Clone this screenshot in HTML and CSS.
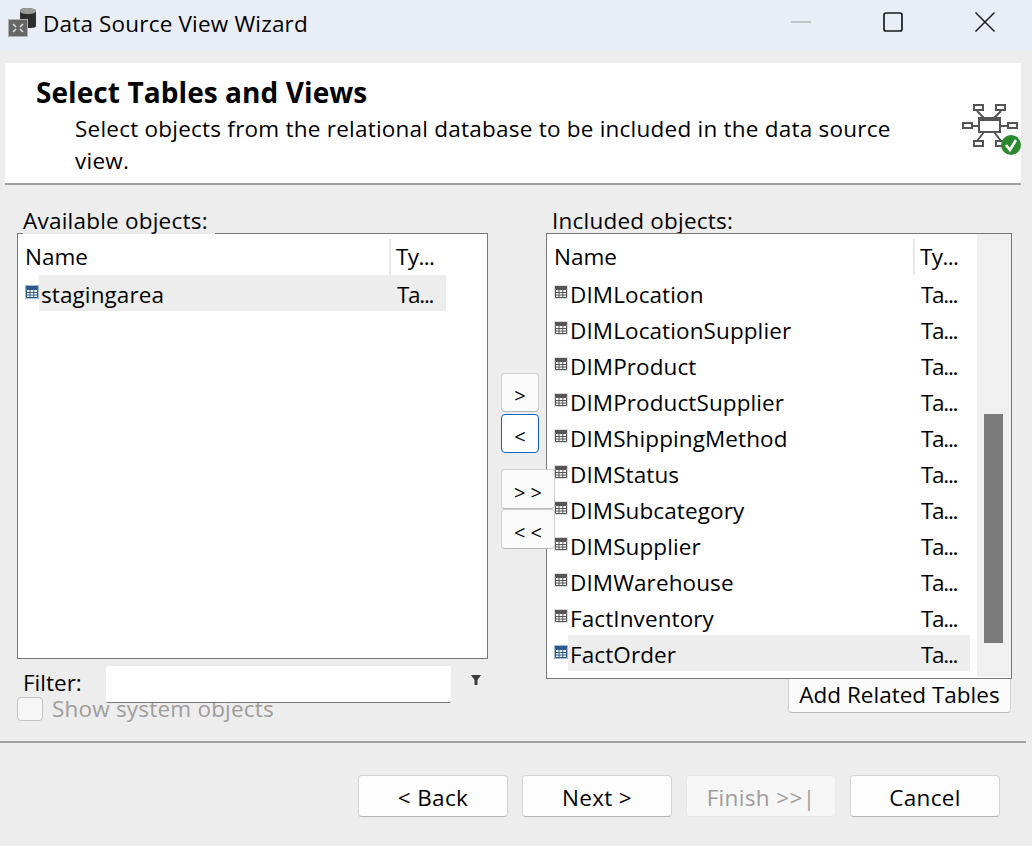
FILE: index.html
```html
<!DOCTYPE html>
<html>
<head>
  <title>Data Source View Wizard</title>
  <link rel="stylesheet" href="styles.css">
</head>
<body>
  <div class="titlebar">
    <svg class="app-icon" width="32" height="30" viewBox="0 0 32 30">
      <path d="M13 4c0-2 3-3 7-3s9 1 9 3v15c0 1-2 2-5 2h-11z" fill="#2e2e2e"/>
      <path d="M13 4c0-2 3-3 7-3s9 1 9 3-3 3-8 3-8-1-8-3z" fill="#9a9a9a"/>
      <rect x="1.5" y="12.5" width="19" height="17" fill="#666" stroke="#b0b0b0"/>
      <path d="M6 17l3 3M16 17l-3 3M6 25l3-3M16 25l-3-3" stroke="#dcdcdc" stroke-width="1.6"/>
    </svg>
    <span class="app-title">Data Source View Wizard</span>
    <div class="win-buttons">
      <svg width="22" height="22" viewBox="0 0 22 22"><path d="M1 11h20" stroke="#b4b4b4" stroke-width="1.5"/></svg>
      <svg width="22" height="22" viewBox="0 0 22 22"><rect x="2" y="2" width="18" height="18" rx="2" fill="none" stroke="#1a1a1a" stroke-width="1.7"/></svg>
      <svg width="22" height="22" viewBox="0 0 22 22"><path d="M1.5 1.5l19 19M20.5 1.5l-19 19" stroke="#1a1a1a" stroke-width="1.5"/></svg>
    </div>
  </div>

  <div class="header">
    <div class="header-text">
      <h1>Select Tables and Views</h1>
      <p>Select objects from the relational database to be included in the data source<br>view.</p>
    </div>
    <svg class="header-icon" width="61" height="56" viewBox="0 0 61 56">
      <g fill="#fff" stroke="#555" stroke-width="2">
        <path d="M17 8l7 7M41 8l-7 7M13 23h6M40 23h8M24 29l-7 9M34 29l7 9" fill="none"/>
        <rect x="14" y="2" width="9" height="5"/>
        <rect x="36" y="2" width="9" height="5"/>
        <rect x="3" y="20" width="9" height="5"/>
        <rect x="48" y="20" width="9" height="5"/>
        <rect x="14" y="38" width="9" height="5"/>
        <rect x="36" y="38" width="9" height="5"/>
        <rect x="19" y="15" width="21" height="14"/>
      </g>
      <rect x="18" y="14" width="23" height="4" fill="#555"/>
      <circle cx="51" cy="42" r="10" fill="#2b8a2f"/>
      <path d="M46 42l4 5 6-10" fill="none" stroke="#fff" stroke-width="2.6"/>
    </svg>
  </div>

  <div class="main">
    <div class="col-left">
      <div class="group-label">Available objects:</div>
      <div class="list-box list-left">
        <div class="list-content">
          <div class="list-head"><span class="head-name">Name</span><span class="head-type">Ty...</span></div>
          <div class="row selected">
            <svg class="tbl-icon" width="14" height="14"><use href="#tbl-blue"/></svg>
            <div class="row-body"><span class="cell-name">stagingarea</span><span class="cell-type">Ta...</span></div>
          </div>
        </div>
      </div>
      <div class="filter-row">
        <label class="filter-label">Filter:</label>
        <input class="filter-input" type="text">
        <svg class="filter-arrow" width="10" height="10" viewBox="0 0 10 10"><path d="M0 0h10L6.5 5v5h-3V5z" fill="#3c3c3c"/></svg>
      </div>
      <div class="check-row">
        <span class="check-box"></span>
        <span class="check-text">Show system objects</span>
      </div>
    </div>

    <div class="col-mid">
      <button class="btn-move">&gt;</button>
      <button class="btn-move focused">&lt;</button>
      <button class="btn-move wide first-wide">&gt; &gt;</button>
      <button class="btn-move wide">&lt; &lt;</button>
    </div>

    <div class="col-right">
      <div class="group-label">Included objects:</div>
      <div class="list-box list-right">
        <div class="list-content">
          <div class="list-head"><span class="head-name">Name</span><span class="head-type">Ty...</span></div>
          <div class="row"><svg class="tbl-icon" width="14" height="14"><use href="#tbl-gray"/></svg><div class="row-body"><span class="cell-name">DIMLocation</span><span class="cell-type">Ta...</span></div></div>
          <div class="row"><svg class="tbl-icon" width="14" height="14"><use href="#tbl-gray"/></svg><div class="row-body"><span class="cell-name">DIMLocationSupplier</span><span class="cell-type">Ta...</span></div></div>
          <div class="row"><svg class="tbl-icon" width="14" height="14"><use href="#tbl-gray"/></svg><div class="row-body"><span class="cell-name">DIMProduct</span><span class="cell-type">Ta...</span></div></div>
          <div class="row"><svg class="tbl-icon" width="14" height="14"><use href="#tbl-gray"/></svg><div class="row-body"><span class="cell-name">DIMProductSupplier</span><span class="cell-type">Ta...</span></div></div>
          <div class="row"><svg class="tbl-icon" width="14" height="14"><use href="#tbl-gray"/></svg><div class="row-body"><span class="cell-name">DIMShippingMethod</span><span class="cell-type">Ta...</span></div></div>
          <div class="row"><svg class="tbl-icon" width="14" height="14"><use href="#tbl-gray"/></svg><div class="row-body"><span class="cell-name">DIMStatus</span><span class="cell-type">Ta...</span></div></div>
          <div class="row"><svg class="tbl-icon" width="14" height="14"><use href="#tbl-gray"/></svg><div class="row-body"><span class="cell-name">DIMSubcategory</span><span class="cell-type">Ta...</span></div></div>
          <div class="row"><svg class="tbl-icon" width="14" height="14"><use href="#tbl-gray"/></svg><div class="row-body"><span class="cell-name">DIMSupplier</span><span class="cell-type">Ta...</span></div></div>
          <div class="row"><svg class="tbl-icon" width="14" height="14"><use href="#tbl-gray"/></svg><div class="row-body"><span class="cell-name">DIMWarehouse</span><span class="cell-type">Ta...</span></div></div>
          <div class="row"><svg class="tbl-icon" width="14" height="14"><use href="#tbl-gray"/></svg><div class="row-body"><span class="cell-name">FactInventory</span><span class="cell-type">Ta...</span></div></div>
          <div class="row selected"><svg class="tbl-icon" width="14" height="14"><use href="#tbl-blue"/></svg><div class="row-body"><span class="cell-name">FactOrder</span><span class="cell-type">Ta...</span></div></div>
        </div>
        <div class="scroll-track"><div class="scroll-thumb"></div></div>
      </div>
      <button class="btn-related">Add Related Tables</button>
    </div>
  </div>

  <div class="footer">
    <button class="btn">&lt; Back</button>
    <button class="btn">Next &gt;</button>
    <button class="btn" disabled>Finish &gt;&gt;|</button>
    <button class="btn">Cancel</button>
  </div>

  <svg width="0" height="0" class="defs">
    <symbol id="tbl-gray" viewBox="0 0 14 14">
      <rect x="0.5" y="0.5" width="13" height="13" fill="#fff" stroke="#ddd"/>
      <rect x="1" y="1" width="12" height="3" fill="#555"/>
      <path d="M1.5 4.5h11v8h-11zM1.5 7.5h11M1.5 10h11M5 4.5v8M8.8 4.5v8" fill="none" stroke="#555"/>
    </symbol>
    <symbol id="tbl-blue" viewBox="0 0 14 14">
      <rect x="0" y="0" width="14" height="14" fill="#9dbcdc"/>
      <rect x="1" y="1" width="12" height="3" fill="#2c5a8c"/>
      <path d="M1.5 4.5h11v8h-11zM1.5 7.5h11M1.5 10h11M5 4.5v8M8.8 4.5v8" fill="#fff" stroke="#2c5a8c"/>
    </symbol>
  </svg>
</body>
</html>
```

FILE: styles.css
```css
* {
  box-sizing: border-box;
}
html, body {
  margin: 0;
  height: 846px;
  overflow: hidden;
}
body {
  background-color: #ededed;
  color: #000;
  font-family: "Open Sans", "Noto Sans", sans-serif;
  font-size: 22.5px;
}
button, input {
  font: inherit;
  color: inherit;
}

.titlebar {
  height: 51px;
  background-color: #e9eef6;
  display: flex;
  align-items: center;
  padding: 0 0 4px 7px;
}
.app-icon {
  margin: 0 4px 4px 0;
}
.app-title {
  line-height: 47px;
  letter-spacing: 0.18px;
}
.win-buttons {
  margin: 0 36px 3px auto;
  display: flex;
  gap: 70px;
}

.header {
  height: 122px;
  margin: 12px 11px 0 5px;
  background-color: #fff;
  border-bottom: 2px solid #a0a0a0;
  display: flex;
  justify-content: space-between;
}
.header-text {
  padding: 9px 0 0 31px;
}
.header h1 {
  margin: 0 0 1px;
  font-size: 28px;
  line-height: 40px;
  font-weight: 700;
  letter-spacing: 0.08px;
}
.header p {
  margin: 0 0 0 39px;
  line-height: 32px;
  letter-spacing: 0.23px;
}
.header-icon {
  margin-top: 40px;
  flex-shrink: 0;
}

.main {
  height: 556px;
  display: flex;
  padding: 21px 0 0 17px;
}
.col-left {
  width: 471px;
}
.col-mid {
  width: 58px;
  padding: 167px 0 0 13px;
  position: relative;
  z-index: 3;
}
.col-right {
  width: 466px;
}
.group-label {
  position: relative;
  z-index: 1;
  width: fit-content;
  margin: 0 0 -1px 6px;
  padding-right: 7px;
  height: 28px;
  line-height: 30px;
  letter-spacing: 0.22px;
  background-color: #ededed;
}

.list-box {
  background-color: #fff;
  border: 1px solid #777;
  display: flex;
}
.list-left {
  height: 426px;
}
.list-right {
  height: 446px;
  position: relative;
  z-index: 2;
}
.list-content {
  width: 428px;
}
.list-right .list-content {
  width: 423px;
}
.list-head {
  height: 41px;
  display: flex;
  align-items: center;
  padding-top: 5px;
}
.head-name {
  flex: 1;
  padding-left: 7px;
  align-self: stretch;
  line-height: 35px;
  border-right: 2px solid #e6e6e6;
}
.head-type {
  width: 55px;
  padding-left: 5px;
  line-height: 35px;
  align-self: stretch;
  letter-spacing: -0.6px;
}
.row {
  height: 36px;
  display: flex;
}
.tbl-icon {
  margin: 10px 0 0 7px;
  flex-shrink: 0;
}
.row-body {
  flex: 1;
  display: flex;
  line-height: 40px;
  white-space: nowrap;
}
.cell-name {
  flex: 1;
  padding-left: 2px;
  letter-spacing: 0.1px;
}
.cell-type {
  width: 49px;
  letter-spacing: -1.3px;
}
.selected .row-body {
  background-color: #ededed;
}

.scroll-track {
  margin: 0 0 1px 7px;
  width: 34px;
  background-color: #f0f0f0;
  padding: 180px 0 0 7px;
}
.scroll-thumb {
  width: 19px;
  height: 229px;
  background-color: #7a7a7a;
}

.filter-row {
  display: flex;
  align-items: flex-start;
  margin: 7px 0 0 6px;
  position: relative;
  z-index: 1;
}
.filter-label {
  width: 83px;
  line-height: 34px;
}
.filter-input {
  width: 345px;
  height: 37px;
  background-color: #fff;
  border: 0;
  border-bottom: 1px solid #777;
  outline: none;
  border-radius: 2px;
}
.filter-arrow {
  margin: 9px 0 0 20px;
}
.check-row {
  display: flex;
  align-items: center;
  gap: 9px;
  margin-top: -6px;
  height: 24px;
  color: #a09c9c;
}
.check-text {
  margin-top: -2px;
  letter-spacing: 0.2px;
}
.check-box {
  width: 26px;
  height: 24px;
  background-color: #f6f6f6;
  border: 1px solid #c4c4c4;
  border-radius: 4px;
}

.btn-move {
  display: block;
  width: 38px;
  height: 39px;
  padding: 5px 0 0;
  margin-bottom: 2px;
  background-color: #fbfbfb;
  border: 1px solid #d0d0d0;
  border-bottom-color: #b8b8b8;
  border-radius: 4px;
  font-size: 20px;
}
.btn-move.focused {
  background-color: #fff;
  border: 1px solid #0a66c2;
}
.btn-move.wide {
  width: 54px;
  height: 40px;
  margin-bottom: 0;
  padding-top: 6px;
}
.btn-move.first-wide {
  margin-top: 16px;
}
.btn-related {
  display: block;
  margin: -1px 1px 0 auto;
  width: 223px;
  height: 35px;
  padding: 0 0 2px;
  background-color: #fbfbfb;
  border: 1px solid #d0d0d0;
  border-bottom-color: #b8b8b8;
  border-radius: 0 0 4px 4px;
  line-height: 30px;
}

.footer {
  height: 105px;
  display: flex;
  justify-content: flex-end;
  gap: 14px;
  padding: 32px 26px 0 0;
  border-top: 2px solid #a0a0a0;
  margin-right: 6px;
}
.btn {
  width: 150px;
  height: 42px;
  padding: 2px 0 0;
  background-color: #fdfdfd;
  border: 1px solid #d4d4d4;
  border-bottom-color: #b4b4b4;
  border-radius: 4px;
  letter-spacing: 0.35px;
}
.btn:disabled {
  background-color: #f6f6f6;
  border-color: #e8e8e8;
  color: #a09c9c;
}
.defs {
  position: absolute;
}
```
